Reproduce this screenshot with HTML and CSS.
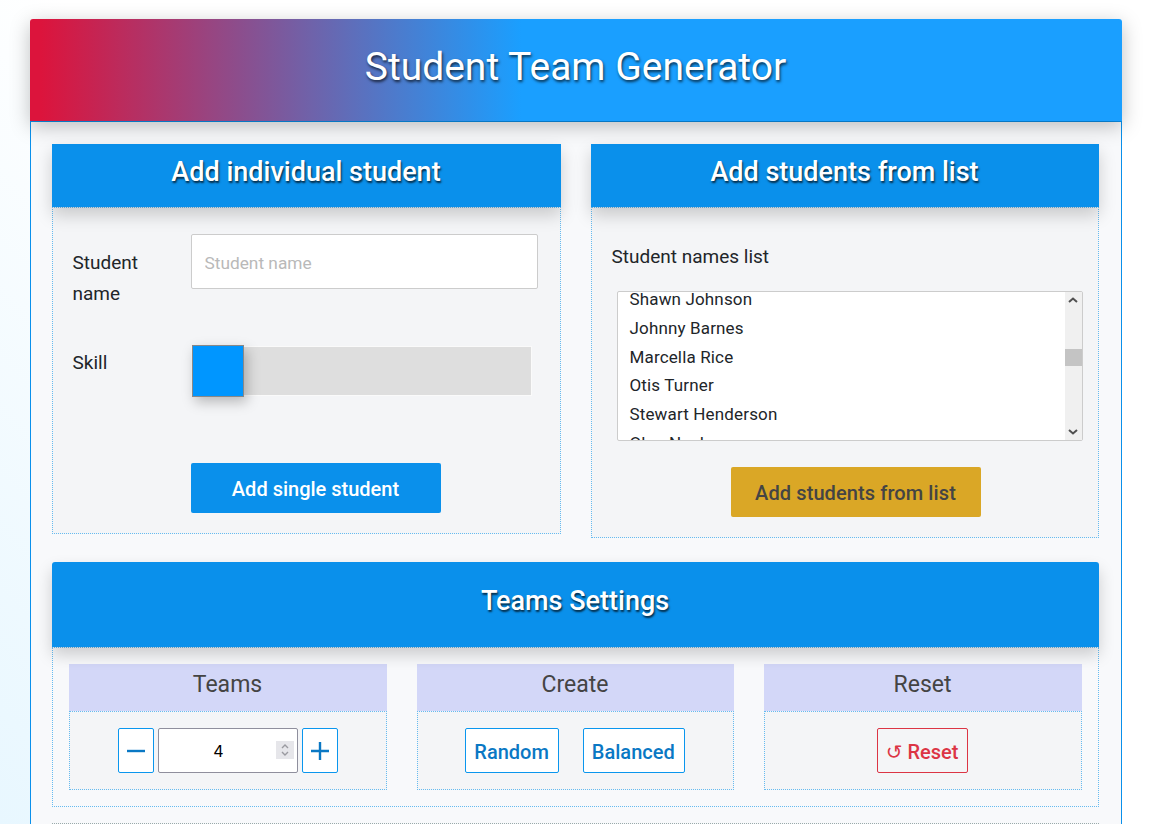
FILE: index.html
```html
<!DOCTYPE html>
<html>
<head>
    <title>Student Team Generator</title>
    <link rel="stylesheet" href="styles.css">
</head>
<body>
<div class="page">
    <header class="mainHeader">
        <h1>Student Team Generator</h1>
    </header>

    <main class="mainBody">
        <div class="addRow">
            <section class="panel panelLeft">
                <h2 class="panelTitle">Add individual student</h2>
                <form class="panelBody singleForm">
                    <label class="fieldLabel nameLabel" for="studentName">Student name</label>
                    <input class="textInput" type="text" id="studentName" placeholder="Student name">

                    <label class="fieldLabel skillLabel" for="skillInput">Skill</label>
                    <input class="skillSlider" type="range" id="skillInput" min="0" max="10" value="0">

                    <button type="button" class="primaryButton">Add single student</button>
                </form>
            </section>

            <section class="panel">
                <h2 class="panelTitle">Add students from list</h2>
                <div class="panelBody listForm">
                    <div class="fieldLabel listLabel">Student names list</div>
                    <div class="namesBox">
                        <div class="namesClip">
                            <div class="namesText">
                                <div>Shawn Johnson</div>
                                <div>Johnny Barnes</div>
                                <div>Marcella Rice</div>
                                <div>Otis Turner</div>
                                <div>Stewart Henderson</div>
                                <div>Olan Neal</div>
                            </div>
                        </div>
                        <div class="fakeScroll">
                            <svg class="scrollArrow" viewBox="0 0 10 6"><path d="M1 5 L5 1.5 L9 5" /></svg>
                            <div class="scrollTrack"><div class="scrollThumb"></div></div>
                            <svg class="scrollArrow" viewBox="0 0 10 6"><path d="M1 1 L5 4.5 L9 1" /></svg>
                        </div>
                    </div>
                    <button type="button" class="goldButton">Add students from list</button>
                </div>
            </section>
        </div>

        <section class="panel settings">
            <h2 class="panelTitle settingsTitle">Teams Settings</h2>
            <div class="panelBody settingsBody">
                <div class="setting">
                    <h3 class="settingTitle">Teams</h3>
                    <div class="settingBody">
                        <button type="button" class="outlineButton squareButton" aria-label="Less">
                            <svg width="18" height="18" viewBox="0 0 18 18"><path d="M0 9 H18" /></svg>
                        </button>
                        <div class="countBox">
                            <input class="teamCount" type="number" value="4">
                            <div class="spinner">
                                <svg width="8" height="14" viewBox="0 0 8 14"><path d="M1 5 L4 2 L7 5 M1 9 L4 12 L7 9" /></svg>
                            </div>
                        </div>
                        <button type="button" class="outlineButton squareButton" aria-label="More">
                            <svg width="18" height="18" viewBox="0 0 18 18"><path d="M0 9 H18 M9 0 V18" /></svg>
                        </button>
                    </div>
                </div>
                <div class="setting">
                    <h3 class="settingTitle">Create</h3>
                    <div class="settingBody createButtons">
                        <button type="button" class="outlineButton">Random</button>
                        <button type="button" class="outlineButton">Balanced</button>
                    </div>
                </div>
                <div class="setting">
                    <h3 class="settingTitle">Reset</h3>
                    <div class="settingBody">
                        <button type="button" class="outlineButton resetButton"><span class="resetIcon">↺</span> Reset</button>
                    </div>
                </div>
            </div>
        </section>

        <section class="nextSection"></section>
    </main>
</div>
</body>
</html>
```

FILE: styles.css
```css
* {
    box-sizing: border-box;
}

html, body {
    height: 100%;
}

body {
    margin: 0;
    overflow: hidden;
    font-family: Roboto, "Liberation Sans", sans-serif;
    color: #212529;
    background: linear-gradient(45deg, #e8f7ff 0%, #ffffff 45%);
}

.page {
    width: 1092px;
    margin: 19px auto 0;
}

/* Top banner */
.mainHeader {
    height: 102px;
    padding-bottom: 6px;
    display: flex;
    align-items: center;
    justify-content: center;
    border-radius: 3px 3px 0 0;
    background: linear-gradient(90deg, #dc143c 0%, #dc143c 1%, #1a9fff 45%);
    box-shadow: 0 5px 20px rgba(0, 0, 0, 0.25);
    position: relative;
    z-index: 2;
}

.mainHeader h1 {
    margin: 0;
    font-size: 39px;
    font-weight: 400;
    color: #fff;
    text-shadow: 1px 2px 3px rgba(0, 0, 0, 0.7);
}

.mainBody {
    border: 1px solid #0a90eb;
    background: #f8f9fb;
    padding: 22px 22px 0 21px;
    height: 800px;
}

.addRow {
    display: grid;
    grid-template-columns: 509px 508px;
    gap: 30px;
    align-items: start;
}

.panel {
    min-width: 0;
}

.panelTitle {
    margin: 0;
    height: 63px;
    padding-bottom: 8px;
    display: flex;
    align-items: center;
    justify-content: center;
    background: #0a90eb;
    color: #fff;
    font-size: 27px;
    font-weight: 500;
    text-shadow: 1px 2px 2px rgba(0, 0, 0, 0.7);
    box-shadow: 0 8px 16px rgba(0, 0, 0, 0.18);
    position: relative;
}

.panelBody {
    border: 1px dotted #66bbf0;
    background: #f4f5f7;
}

/* Single student form */
.singleForm {
    display: grid;
    grid-template-columns: 118px 347px;
    padding: 26px 0 20px 20px;
    height: 327px;
    align-content: start;
}

.fieldLabel {
    font-size: 19px;
    line-height: 31px;
    color: #212529;
}

.singleForm .fieldLabel {
    padding-right: 40px;
}

.nameLabel {
    padding-top: 13px;
}

.textInput {
    height: 55px;
    padding: 3px 13px 0;
    border: 1px solid #ccc;
    border-radius: 2px;
    background: #fff;
    font-family: inherit;
    font-size: 17.3px;
}

.textInput::placeholder {
    color: #b9b9b9;
}

.skillLabel {
    margin-top: 38px;
}

.skillSlider {
    -webkit-appearance: none;
    appearance: none;
    display: block;
    width: 341px;
    height: 50px;
    margin: 37px 0 0;
    background: #dedede;
    border: 1px solid #fafafa;
    outline: none;
}

.skillSlider::-webkit-slider-thumb {
    -webkit-appearance: none;
    appearance: none;
    width: 52px;
    height: 52px;
    background: #0096ff;
    border: 1px solid #888;
    box-shadow: 3px 5px 12px rgba(0, 0, 0, 0.25);
    cursor: pointer;
}

.primaryButton {
    grid-column: 2;
    width: 250px;
    height: 50px;
    margin-top: 67px;
    padding-top: 3px;
    border: 0;
    border-radius: 2px;
    background: #0a90eb;
    color: #fff;
    font-family: inherit;
    font-size: 20px;
    font-weight: 500;
}

/* List form */
.listForm {
    height: 331px;
    padding: 33px 15px 0 20px;
}

.listLabel {
    line-height: 32px;
}

.namesBox {
    display: flex;
    height: 150px;
    width: 466px;
    margin: 18px 0 0 5px;
    border: 1px solid #ccc;
    border-radius: 2px;
    background: #fff;
}

.namesClip {
    flex: 1;
    overflow: hidden;
    padding: 0 12px;
}

.namesText {
    margin-top: -7px;
    font-size: 17px;
    letter-spacing: 0.15px;
    line-height: 28.8px;
    color: #212529;
}

.fakeScroll {
    width: 17px;
    display: flex;
    flex-direction: column;
    align-items: center;
    background: #f0f0f0;
}

.scrollArrow {
    width: 10px;
    height: 6px;
    margin: 5px 0;
    flex: none;
}

.scrollArrow path {
    fill: none;
    stroke: #505050;
    stroke-width: 2;
}

.scrollTrack {
    flex: 1;
    width: 100%;
    padding-top: 41px;
}

.scrollThumb {
    height: 17px;
    background: #c4c4c4;
}

.goldButton {
    display: block;
    width: 250px;
    height: 50px;
    margin: 26px 0 0 119px;
    padding-top: 3px;
    border: 0;
    border-radius: 2px;
    background: #daa726;
    color: #444;
    font-family: inherit;
    font-size: 20px;
    letter-spacing: 0.1px;
    font-weight: 500;
}

/* Teams settings */
.settings {
    margin-top: 24px;
}

.settingsTitle {
    height: 85px;
    border-radius: 3px 3px 0 0;
}

.settingsBody {
    display: grid;
    grid-template-columns: 318px 317px 318px;
    gap: 30px;
    height: 160px;
    padding: 16px 16px 0;
    background: transparent;
}

.settingTitle {
    margin: 0;
    height: 47px;
    padding-bottom: 6px;
    display: flex;
    align-items: center;
    justify-content: center;
    background: #d3d7f8;
    color: #444;
    font-size: 23px;
    font-weight: 400;
}

.settingBody {
    height: 79px;
    display: flex;
    gap: 4px;
    justify-content: center;
    align-items: center;
    border: 1px dotted #66bbf0;
    background: #f4f5f7;
}

.createButtons {
    gap: 24px;
}

.outlineButton {
    height: 45px;
    padding: 2px 9px 0 8px;
    border: 1px solid #0a96ee;
    border-radius: 2px;
    background: #fff;
    color: #0a78c4;
    font-family: inherit;
    font-size: 20px;
    font-weight: 500;
}

.squareButton {
    width: 36px;
    padding: 0;
    display: flex;
    align-items: center;
    justify-content: center;
}

.squareButton path {
    fill: none;
    stroke: #0a78c4;
    stroke-width: 2.4;
}

.countBox {
    position: relative;
}

.teamCount {
    display: block;
    width: 140px;
    height: 45px;
    padding: 0 18px 0 0;
    border: 1px solid #8f8f9d;
    border-radius: 2px;
    background: #fff;
    text-align: center;
    font-family: Inter, sans-serif;
    font-size: 16px;
    color: #000;
    -moz-appearance: textfield;
}

.teamCount::-webkit-inner-spin-button {
    -webkit-appearance: none;
}

/* the stepper sits over the number field */
.spinner {
    position: absolute;
    top: 13px;
    right: 4px;
    width: 18px;
    height: 18px;
    display: flex;
    align-items: center;
    justify-content: center;
    background: #e6e6ea;
}

.spinner path {
    fill: none;
    stroke: #9a9aa0;
    stroke-width: 1.4;
}

.resetButton {
    border-color: #dc3545;
    background: #f4f5f7;
    color: #dc3545;
}

.resetIcon {
    font-family: "DejaVu Sans", sans-serif;
    font-size: 20px;
    line-height: 20px;
    font-weight: 400;
}

.nextSection {
    margin-top: 16px;
    border-top: 1px dotted #99aaaa;
}
```
